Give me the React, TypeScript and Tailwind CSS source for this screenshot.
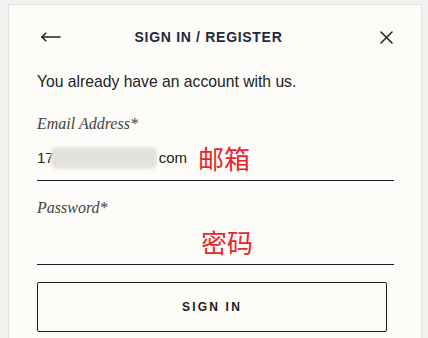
import React from 'react';

const sans = { fontFamily: '"Liberation Sans", Arial, sans-serif' };
const serif = { fontFamily: '"Liberation Serif", "Times New Roman", serif' };
const cjk = { fontFamily: '"Noto Sans CJK SC", "Noto Sans", sans-serif' };

function BackArrow() {
  return (
    <svg width="22" height="12" viewBox="0 0 22 12" fill="none" stroke="#1f1f1f" strokeWidth="1.6" strokeLinecap="round" strokeLinejoin="round">
      <path d="M21 6H2" />
      <path d="M6 2L2 6l4 4" />
    </svg>
  );
}

function CloseIcon() {
  return (
    <svg width="13" height="13" viewBox="0 0 13 13" fill="none" stroke="#1f1f1f" strokeWidth="1.5" strokeLinecap="round">
      <path d="M1 1l11 11M12 1L1 12" />
    </svg>
  );
}

export default function App() {
  return (
    <div className="w-[428px] h-[338px] bg-[#f2f2f0] pt-[4px] pl-[8px] overflow-hidden" style={sans}>
      <div className="w-[414px] h-[340px] bg-[#fdfcf8] border-l border-t border-r border-[#e2e2e0] pl-[28px] pr-[27px] pt-[20px]">
        {/* header */}
        <div className="h-[24px] flex items-center justify-between">
          <div className="w-[24px] pl-[3px] flex items-center"><BackArrow /></div>
          <div className="text-[14px] font-bold tracking-[0.7px] text-[#1e2a3f]">SIGN IN / REGISTER</div>
          <div className="w-[38px] flex justify-end pr-[1px]"><CloseIcon /></div>
        </div>

        <div className="mt-[22px] h-[22px] leading-[22px] text-[15.7px] text-[#222]">
          You already have an account with us.
        </div>

        {/* email */}
        <div className="mt-[19px] h-[24px] leading-[24px] text-[16px] italic text-[#444]" style={serif}>
          Email Address*
        </div>
        <div className="h-[45px] border-b border-[#1b1b2b] flex items-center text-[15px] text-[#222]">
          <span>17</span>
          <span className="inline-block -ml-[3px] w-[106px] h-[22px] bg-[#e3e2df] rounded-md blur-[1.5px]" />
          <span className="ml-[2px]">com</span>
          <span className="ml-[11px] text-[26px] leading-none text-[#e8262b]" style={cjk}>邮箱</span>
        </div>

        {/* password */}
        <div className="mt-[15px] h-[24px] leading-[24px] text-[16px] italic text-[#444]" style={serif}>
          Password*
        </div>
        <div className="h-[45px] border-b border-[#1b1b2b] flex items-center pl-[164px]">
          <span className="text-[26px] leading-none text-[#e8262b]" style={cjk}>密码</span>
        </div>

        {/* button */}
        <button className="mt-[17px] w-[350px] h-[50px] border border-[#1b1b1b] rounded-[2px] flex items-center justify-center text-[12px] font-bold tracking-[2.2px] text-[#1b1b1b]">
          SIGN IN
        </button>
      </div>
    </div>
  );
}
